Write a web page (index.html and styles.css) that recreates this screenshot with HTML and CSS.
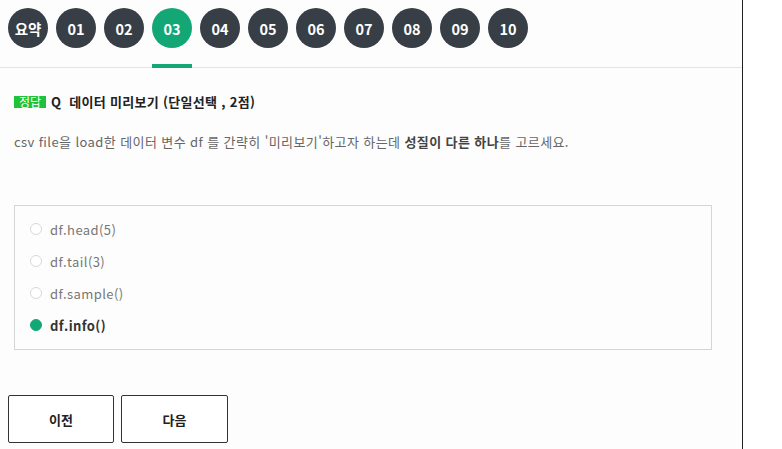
FILE: index.html
```html
<!DOCTYPE html>
<html lang="ko">
<head>
<meta charset="utf-8">
<link rel="stylesheet" href="styles.css">
</head>
<body>
<div class="page">
  <div class="main">
    <nav class="tabs">
      <div class="tab"><span class="dot">요약</span><span class="bar"></span></div>
      <div class="tab"><span class="dot">01</span><span class="bar"></span></div>
      <div class="tab"><span class="dot">02</span><span class="bar"></span></div>
      <div class="tab active"><span class="dot">03</span><span class="bar"></span></div>
      <div class="tab"><span class="dot">04</span><span class="bar"></span></div>
      <div class="tab"><span class="dot">05</span><span class="bar"></span></div>
      <div class="tab"><span class="dot">06</span><span class="bar"></span></div>
      <div class="tab"><span class="dot">07</span><span class="bar"></span></div>
      <div class="tab"><span class="dot">08</span><span class="bar"></span></div>
      <div class="tab"><span class="dot">09</span><span class="bar"></span></div>
      <div class="tab"><span class="dot">10</span><span class="bar"></span></div>
    </nav>
    <section class="question">
      <h2 class="title"><span class="badge">정답</span><span class="q">Q</span>데이터 미리보기 (단일선택 , 2점)</h2>
      <p class="desc">csv file을 load한 데이터 변수 df 를 간략히 '미리보기'하고자 하는데 <b>성질이 다른 하나</b>를 고르세요.</p>
      <ul class="options">
        <li class="opt"><span class="radio"></span>df.head(5)</li>
        <li class="opt"><span class="radio"></span>df.tail(3)</li>
        <li class="opt"><span class="radio"></span>df.sample()</li>
        <li class="opt selected"><span class="radio"></span>df.info()</li>
      </ul>
      <div class="buttons">
        <button class="btn prev">이전</button>
        <button class="btn next">다음</button>
      </div>
    </section>
  </div>
  <div class="side"></div>
</div>
</body>
</html>
```

FILE: styles.css
```css
* { box-sizing: border-box; }
html, body { margin: 0; padding: 0; background: #fff; }
body {
  font-family: "Noto Sans CJK KR", "Noto Sans", sans-serif;
  color: #333;
}
.page { display: flex; height: 449px; overflow: hidden; }
.main {
  width: 743px;
  background: #fdfdfd;
  border-right: 1px solid #222;
  height: 449px;
}
.side { flex: 1; background: #fff; }
.tabs {
  display: flex;
  gap: 8px;
  padding: 8px 0 0 8px;
  height: 68px;
  border-bottom: 1px solid #e4e4e4;
}
.tab { display: flex; flex-direction: column; width: 40px; }
.dot {
  width: 40px; height: 40px;
  border-radius: 50%;
  background: #373e45;
  color: #fff;
  font-weight: 700;
  font-size: 14.5px;
  display: flex; align-items: center; justify-content: center;
}
.bar { height: 4px; margin-top: 16px; margin-bottom: -1px; position: relative; }
.tab.active .dot { background: #13a775; }
.tab.active .bar { background: #13a775; }
.question { padding: 0 0 0 14px; }
.title {
  margin: 22px 0 0 0;
  font-size: 13px;
  font-weight: 700;
  color: #222;
  display: flex; align-items: center;
  height: 24px;
  line-height: 24px;
  letter-spacing: 0.3px;
}
.badge {
  background: #1ec23b;
  color: #fff;
  font-size: 12px;
  font-weight: 400;
  height: 12px;
  line-height: 12px;
  width: 32px;
  display: inline-flex; align-items: center; justify-content: center;
  margin-right: 5px;
  letter-spacing: 0;
}
.q { margin-right: 8px; }
.desc {
  margin: 18px 0 0 0;
  font-size: 13px;
  color: #666;
  line-height: 20px;
  letter-spacing: 0.4px;
}
.desc b { font-weight: 700; color: #444; }
.options {
  list-style: none;
  margin: 53px 0 0 0;
  width: 698px;
  height: 145px;
  border: 1px solid #d5d5d5;
  padding: 7px 0 0 15px;
}
.opt {
  display: flex; align-items: center;
  height: 32px;
  font-size: 13px;
  color: #777;
  letter-spacing: 0.4px;
}
.radio {
  width: 12px; height: 12px;
  border-radius: 50%;
  border: 1px solid #d8d8d8;
  background: #fff;
  margin-right: 8px;
}
.opt.selected { color: #333; font-weight: 700; }
.opt.selected .radio { background: #13a775; border-color: #13a775; }
.buttons { display: flex; gap: 7px; margin: 45px 0 0 -6px; }
.btn {
  width: 106px; height: 48px;
  border: 1px solid #333;
  border-radius: 2px;
  background: #fff;
  font-family: inherit;
  font-size: 13px;
  font-weight: 700;
  color: #222;
}
.btn.next { width: 107px; }
```
